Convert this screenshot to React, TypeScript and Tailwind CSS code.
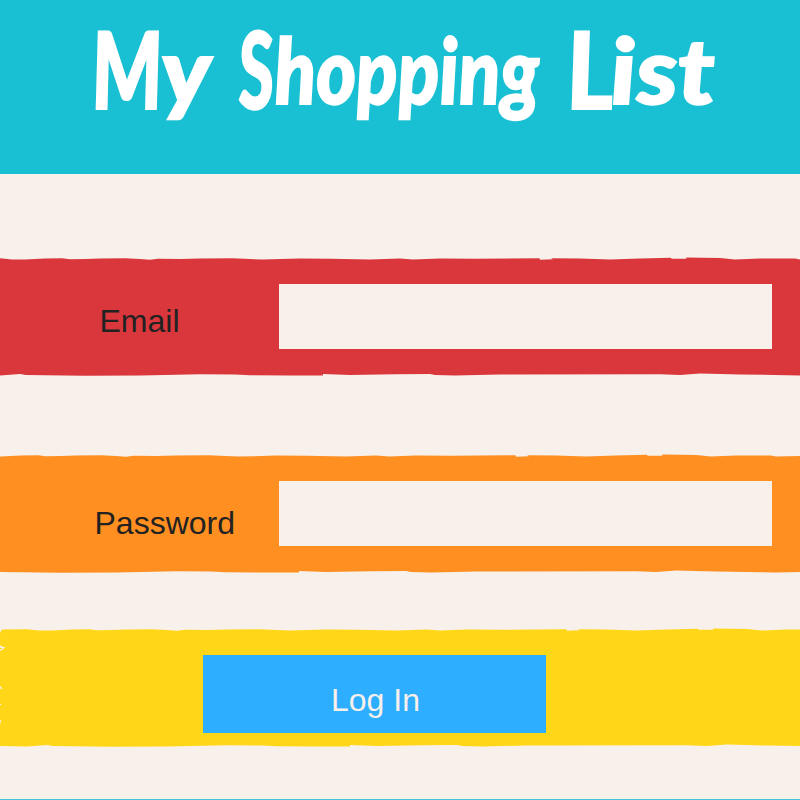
import type { ReactNode } from "react";

const TOP_EDGE =
  "M-30 5V1.6L0 1.3 12 2.5 25 2.4 45 1.5 62 1.2 70 2.3 85 2 100 1.5 125 1.2 140 2 150 2.7 158 1.8 180 2 200 1.5 232 1.2 250 1.9 262 2.6 300 1.6 330 1.7 370 2.6 400 1.6 413 2.6 440 1.5 475 1.8 539.5 1.2 540 2.8 553 2.2 551 1.2 580 1.5 610 2.4 640 1.4 671 .7 671.5 1.7 686 1.7 686.5 .6 720 1 735 2.5 760 1.6 795 1.5 800 2.6 830 2V5Z";
const BOTTOM_EDGE =
  "M-30 0V3L0 3.6 20 2 26 3 85 3.8 140 3.4 200 2.2 235 2.6 250 3.2 290 3.6 323 3.4 323 2 350 3 395 2.3 430 2.1 435 3.1 455 3.6 500 2.4 660 2.3 680 3 700 1.6 740 2.5 800 3.4 830 3V0Z";

type BandProps = {
  body: string;
  fill: string;
  shift: number;
  children: ReactNode;
};

function Band({ body, fill, shift, children }: BandProps) {
  return (
    <section className="flex h-[120px] w-full flex-col">
      <svg className={`block h-[5px] w-full shrink-0 ${fill}`} viewBox={`${-shift} 0 800 5`} preserveAspectRatio="none" aria-hidden="true">
        <path d={TOP_EDGE} />
      </svg>
      <div className={`flex h-[110px] w-full items-start ${body}`}>{children}</div>
      <svg className={`block h-[5px] w-full shrink-0 ${fill}`} viewBox={`${-shift} 0 800 5`} preserveAspectRatio="none" aria-hidden="true">
        <path d={BOTTOM_EDGE} />
      </svg>
    </section>
  );
}

type WordProps = { width: string; capWidth: string; cap: string; rest: string; children: [string, string] };

// Each word has a tall capital and a smaller, slightly raised lowercase run.
function Word({ width, capWidth, cap, rest, children }: WordProps) {
  return (
    <span className={`flex shrink-0 items-baseline ${width}`}>
      <span className={`shrink-0 ${capWidth}`}>
        <span className={`inline-block origin-left skew-x-[5deg] ${cap}`}>{children[0]}</span>
      </span>
      <span className={`inline-block origin-left -translate-y-[5px] skew-x-[3deg] text-[91px] ${rest}`}>{children[1]}</span>
    </span>
  );
}

export default function App() {
  return (
    <main className="flex h-[800px] w-[800px] flex-col overflow-hidden bg-[#f8f0eb] font-['Liberation_Sans',Arial,sans-serif] text-[32px] leading-[36px] text-[#222]">
      <header className="h-[174px] shrink-0 bg-[#19bfd2]">
        <h1 className="flex pt-[4px] pl-[91px] font-['Lato',sans-serif] text-[107px] leading-[128px] font-black whitespace-pre text-white italic [-webkit-text-stroke:2px_white]">
          <Word width="w-[147px]" capWidth="w-[70px]" cap="scale-x-[0.75]" rest="scale-x-[1.1]">{["M", "y"]}</Word>
          <Word width="w-[328px]" capWidth="w-[36px]" cap="scale-x-[0.64]" rest="scale-x-[0.84]">{["S", "hopping"]}</Word>
          <Word width="w-[160px]" capWidth="w-[44px]" cap="scale-x-[0.9]" rest="scale-x-[1.12]">{["L", "ist"]}</Word>
        </h1>
      </header>

      <form className="flex grow flex-col pt-[83px]" onSubmit={(e) => e.preventDefault()}>
        <Band body="bg-[#da373d]" fill="fill-[#da373d]" shift={0}>
          <label htmlFor="email" className="w-[279px] pt-[41px] pl-[99.5px]">Email</label>
          <input id="email" type="email" className="mt-[22px] h-[65px] w-[493px] bg-[#f8f0eb] px-3 outline-none" />
        </Band>
        <div className="h-[77px]" />
        <Band body="bg-[#ff8f20]" fill="fill-[#ff8f20]" shift={-24}>
          <label htmlFor="password" className="w-[279px] pt-[46px] pl-[94.5px]">Password</label>
          <input id="password" type="password" className="mt-[22px] h-[65px] w-[493px] bg-[#f8f0eb] px-3 outline-none" />
        </Band>
        <div className="h-[54px]" />
        <div className="relative">
          <Band body="bg-[#ffd718]" fill="fill-[#ffd718]" shift={27}>
            <button type="submit" className="mt-[22px] ml-[203px] flex h-[78px] w-[343px] justify-center bg-[#2eaeff] pt-[27px] pl-[2px] text-[#f8f0eb]">
              Log In
            </button>
          </Band>
          <svg className="absolute top-0 left-0 h-[120px] w-[6px] fill-[#f8f0eb]" viewBox="0 0 6 120" aria-hidden="true">
            <path d="M0 0H3L1 3 0 5ZM0 17.5 5.5 19.8 3 20.5 3.5 21 0 23V21.5L2.5 20.5 0 19.5ZM0 58 3 61 0 60.5ZM0 76h1v1H0ZM0 92h1l-1 5Z" />
          </svg>
        </div>
      </form>
      <div className="h-px shrink-0 bg-[#3fc7d7]" />
    </main>
  );
}
